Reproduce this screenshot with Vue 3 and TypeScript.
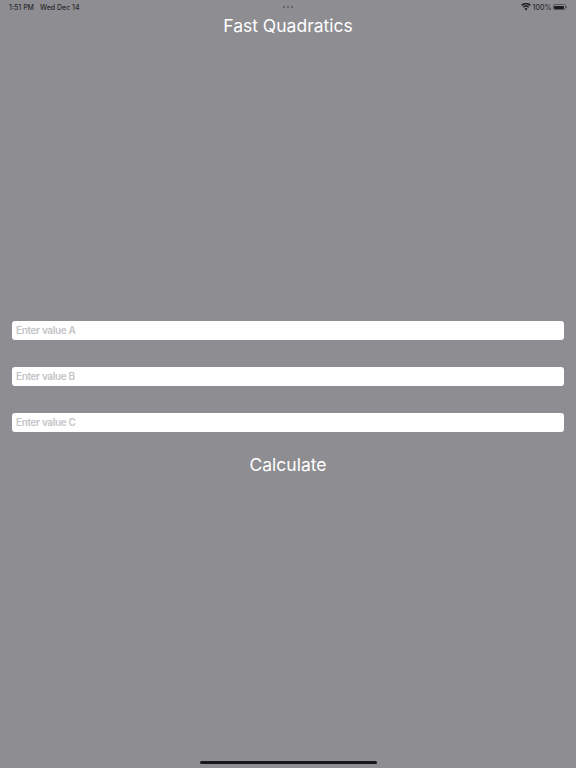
<script setup lang="ts">
const fields: string[] = ['Enter value A', 'Enter value B', 'Enter value C']
</script>

<template>
  <div class="screen">
    <header class="status">
      <div class="status-left">
        <span>1:51 PM</span>
        <span>Wed Dec 14</span>
      </div>
      <div class="dots"><i></i><i></i><i></i></div>
      <div class="status-right">
        <svg class="wifi" viewBox="0 0 16 12" width="10" height="8">
          <path d="M8 11.5 5.6 8.6a3.7 3.7 0 0 1 4.8 0Z" fill="#1c1c1e" />
          <path d="M4.5 7.3 3 5.5a7.6 7.6 0 0 1 10 0l-1.5 1.8a5.3 5.3 0 0 0-7 0Z" fill="#1c1c1e" />
          <path d="M1.9 4.2.3 2.3a11.8 11.8 0 0 1 15.4 0l-1.6 1.9a9.3 9.3 0 0 0-12.2 0Z" fill="#1c1c1e" />
        </svg>
        <span class="pct">100%</span>
        <div class="battery"><div class="battery-fill"></div></div>
        <div class="battery-cap"></div>
      </div>
    </header>

    <h1 class="title">Fast Quadratics</h1>

    <main class="form">
      <input v-for="f in fields" :key="f" class="field" type="text" :placeholder="f" />
      <button class="calc" type="button">Calculate</button>
    </main>

    <div class="home"></div>
  </div>
</template>

<style>
html, body { margin: 0; padding: 0; background: #8e8d92; }
</style>

<style scoped>
.screen {
  width: 576px;
  height: 768px;
  background: #8e8d92;
  display: flex;
  flex-direction: column;
  font-family: "Inter", "Liberation Sans", sans-serif;
  overflow: hidden;
}
.status {
  height: 14px;
  display: grid;
  grid-template-columns: 1fr auto 1fr;
  align-items: center;
  padding: 0 9px 0 9px;
  font-size: 7px;
  font-weight: 500;
  color: #2a2a2d;
}
.status-left { display: flex; gap: 6px; }
.dots { display: flex; gap: 1.5px; }
.dots i { width: 2.5px; height: 2.5px; border-radius: 50%; background: #5f5e63; }
.status-right { display: flex; align-items: center; justify-content: flex-end; }
.wifi { margin-right: 2px; }
.pct { margin-right: 2px; width: 18px; }
.battery {
  width: 13px;
  height: 6px;
  border: 0.5px solid #55555a;
  border-radius: 1.5px;
  padding: 0.5px;
  box-sizing: border-box;
}
.battery-fill { width: 100%; height: 100%; background: #1c1c1e; border-radius: 1px; }
.battery-cap { width: 1px; height: 2px; background: #66666b; margin-left: 0.5px; }
.title {
  margin: 0;
  height: 24px;
  line-height: 24px;
  text-align: center;
  font-size: 17.5px;
  font-weight: 400;
  color: #fff;
}
.form {
  margin-top: 283px;
  padding: 0 12px;
  display: flex;
  flex-direction: column;
}
.field {
  height: 19px;
  margin: 0 0 27px;
  padding: 0 4px 1px;
  border: 0;
  border-radius: 3px;
  background: #fff;
  box-sizing: border-box;
  width: 100%;
  font: 600 10px "Inter", "Liberation Sans", sans-serif;
  letter-spacing: -0.35px;
  outline: none;
}
.field::placeholder { color: #c4c4c7; opacity: 1; }
.field:nth-of-type(3) { margin-bottom: 0; }
.calc {
  margin-top: 22px;
  height: 22px;
  padding: 0;
  border: 0;
  background: none;
  color: #fff;
  font: 400 17.5px "Inter", "Liberation Sans", sans-serif;
  line-height: 22px;
  text-align: center;
}
.home {
  width: 177px;
  height: 3px;
  border-radius: 2px;
  background: #17171a;
  margin: auto auto 4px;
}
</style>
